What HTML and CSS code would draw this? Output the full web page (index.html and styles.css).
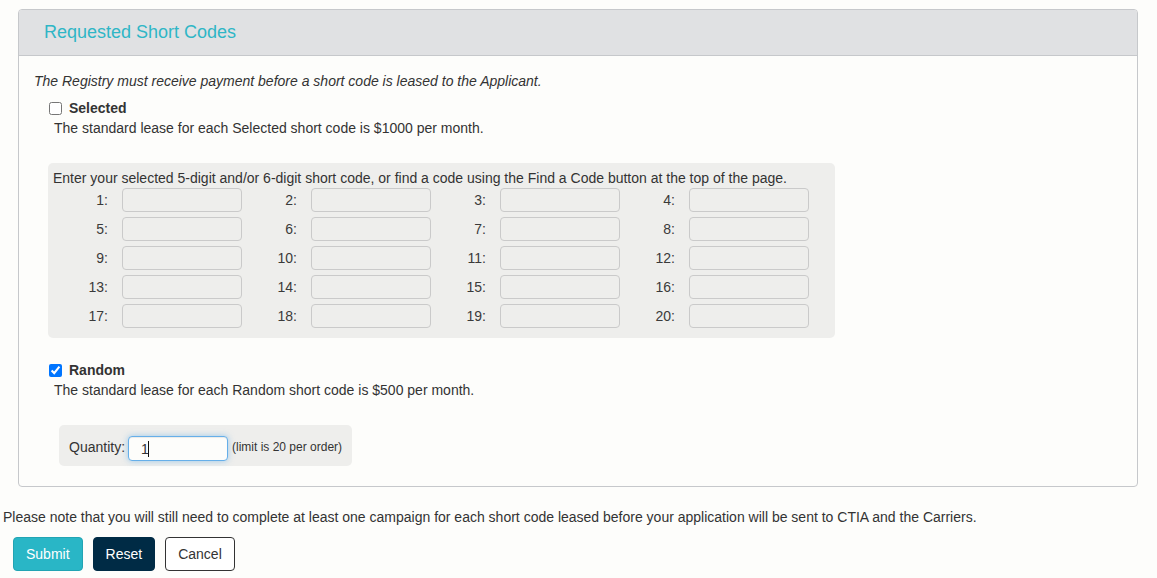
FILE: index.html
```html
<!DOCTYPE html>
<html lang="en">
<head>
<meta charset="utf-8">
<title>Requested Short Codes</title>
<link rel="stylesheet" href="styles.css">
</head>
<body>
<main class="page">
  <section class="card">
    <header class="card-head">
      <h2 class="card-title">Requested Short Codes</h2>
    </header>
    <div class="card-body">
      <p class="note">The Registry must receive payment before a short code is leased to the Applicant.</p>

      <div class="option">
        <label class="opt-label"><input type="checkbox" class="opt-check"><span>Selected</span></label>
        <p class="opt-desc">The standard lease for each Selected short code is $1000 per month.</p>
      </div>

      <div class="codes">
        <p class="codes-intro">Enter your selected 5-digit and/or 6-digit short code, or find a code using the Find a Code button at the top of the page.</p>
        <div class="codes-grid">
          <label class="code-num" for="c1">1:</label><input class="code-input" id="c1" disabled>
          <label class="code-num" for="c2">2:</label><input class="code-input" id="c2" disabled>
          <label class="code-num" for="c3">3:</label><input class="code-input" id="c3" disabled>
          <label class="code-num" for="c4">4:</label><input class="code-input" id="c4" disabled>
          <label class="code-num" for="c5">5:</label><input class="code-input" id="c5" disabled>
          <label class="code-num" for="c6">6:</label><input class="code-input" id="c6" disabled>
          <label class="code-num" for="c7">7:</label><input class="code-input" id="c7" disabled>
          <label class="code-num" for="c8">8:</label><input class="code-input" id="c8" disabled>
          <label class="code-num" for="c9">9:</label><input class="code-input" id="c9" disabled>
          <label class="code-num" for="c10">10:</label><input class="code-input" id="c10" disabled>
          <label class="code-num" for="c11">11:</label><input class="code-input" id="c11" disabled>
          <label class="code-num" for="c12">12:</label><input class="code-input" id="c12" disabled>
          <label class="code-num" for="c13">13:</label><input class="code-input" id="c13" disabled>
          <label class="code-num" for="c14">14:</label><input class="code-input" id="c14" disabled>
          <label class="code-num" for="c15">15:</label><input class="code-input" id="c15" disabled>
          <label class="code-num" for="c16">16:</label><input class="code-input" id="c16" disabled>
          <label class="code-num" for="c17">17:</label><input class="code-input" id="c17" disabled>
          <label class="code-num" for="c18">18:</label><input class="code-input" id="c18" disabled>
          <label class="code-num" for="c19">19:</label><input class="code-input" id="c19" disabled>
          <label class="code-num" for="c20">20:</label><input class="code-input" id="c20" disabled>
        </div>
      </div>

      <div class="option option-random">
        <label class="opt-label"><input type="checkbox" class="opt-check" checked><span>Random</span></label>
        <p class="opt-desc">The standard lease for each Random short code is $500 per month.</p>
      </div>

      <div class="qty">
        <label class="qty-label" for="qty">Quantity:</label>
        <span class="qty-field"><input class="qty-input" id="qty" value="1"></span>
        <span class="qty-limit">(limit is 20 per order)</span>
      </div>
    </div>
  </section>

  <p class="footnote">Please note that you will still need to complete at least one campaign for each short code leased before your application will be sent to CTIA and the Carriers.</p>

  <div class="actions">
    <button type="submit" class="btn btn-submit">Submit</button>
    <button type="reset" class="btn btn-reset">Reset</button>
    <button type="button" class="btn btn-cancel">Cancel</button>
  </div>
</main>
</body>
</html>
```

FILE: styles.css
```css
* { box-sizing: border-box; }

html, body {
  margin: 0;
  background: #fdfdfb;
}

body {
  font-family: "Liberation Sans", Arial, sans-serif;
  font-size: 14px;
  line-height: 20px;
  color: #333333;
}

.page {
  padding: 9px 3px 0 3px;
}

.card {
  margin: 0 16px 0 15px;
  border: 1px solid #c6c8cb;
  border-radius: 4px;
  background: #fdfdfb;
}

.card-head {
  background: #e0e1e3;
  border-bottom: 1px solid #c6c8cb;
  border-radius: 3px 3px 0 0;
  padding: 0 25px;
}

.card-title {
  margin: 0;
  font-size: 18px;
  font-weight: normal;
  line-height: 45px;
  color: #2fb6c6;
}

.card-body {
  padding: 15px 15px 20px 15px;
}

.note {
  margin: 0 0 7px 0;
  font-style: italic;
}

.option {
  margin-left: 15px;
}

.opt-label {
  display: flex;
  align-items: center;
  font-weight: bold;
  height: 20px;
}

.opt-check {
  width: 13px;
  height: 13px;
  margin: 1px 7px 0 0;
}

.opt-desc {
  margin: 0 0 0 5px;
}

.codes {
  display: block;
  width: fit-content;
  margin: 25px 0 22px 14px;
  padding: 7px 26px 10px 5px;
  background: #eeeeec;
  border-radius: 5px;
}

.codes-intro {
  margin: 0;
  line-height: 16px;
}

.codes-grid {
  display: grid;
  grid-template-columns: repeat(4, 41px 120px);
  column-gap: 14px;
  row-gap: 5px;
  margin: 2px 0 0 14px;
  align-items: center;
}

.code-num {
  text-align: right;
  line-height: 24px;
  color: #3a3a3a;
}

.code-input {
  width: 120px;
  height: 24px;
  margin: 0;
  border: 1px solid #cacaca;
  border-radius: 4px;
  background: #eeeeec;
  font: inherit;
}

.qty {
  display: inline-flex;
  align-items: center;
  margin: 25px 0 0 25px;
  padding: 11px 10px 5px 10px;
  background: #eeeeec;
  border-radius: 5px;
}

.qty-label {
  margin-right: 3px;
  margin-top: -3px;
}

.qty-field {
  position: relative;
  display: block;
}

.qty-field::after {
  content: "";
  position: absolute;
  left: 20px;
  top: 5px;
  width: 1px;
  height: 16px;
  background: #111;
}

.qty-input {
  display: block;
  width: 100px;
  height: 25px;
  margin: 0;
  padding: 2px 12px;
  font: inherit;
  color: #333;
  background: #fdfdfb;
  border: 1px solid #66afe9;
  border-radius: 4px;
  outline: none;
  box-shadow: inset 0 1px 1px rgba(0, 0, 0, 0.075), 0 0 6px rgba(102, 175, 233, 0.6);
}

.qty-limit {
  margin-left: 4px;
  margin-top: -3px;
  font-size: 12px;
}

.footnote {
  margin: 20px 0 10px 0;
}

.actions {
  display: flex;
  gap: 10px;
  margin-left: 10px;
}

.btn {
  font-family: "Liberation Sans", Arial, sans-serif;
  font-size: 14px;
  line-height: 20px;
  padding: 6px 12px;
  border: 1px solid transparent;
  border-radius: 4px;
  cursor: pointer;
}

.btn-submit {
  background: #29b6c6;
  border-color: #22a4b3;
  color: #ffffff;
}

.btn-reset {
  background: #002b45;
  border-color: #002b45;
  color: #ffffff;
}

.btn-cancel {
  background: #ffffff;
  border-color: #333333;
  color: #333333;
}
```
